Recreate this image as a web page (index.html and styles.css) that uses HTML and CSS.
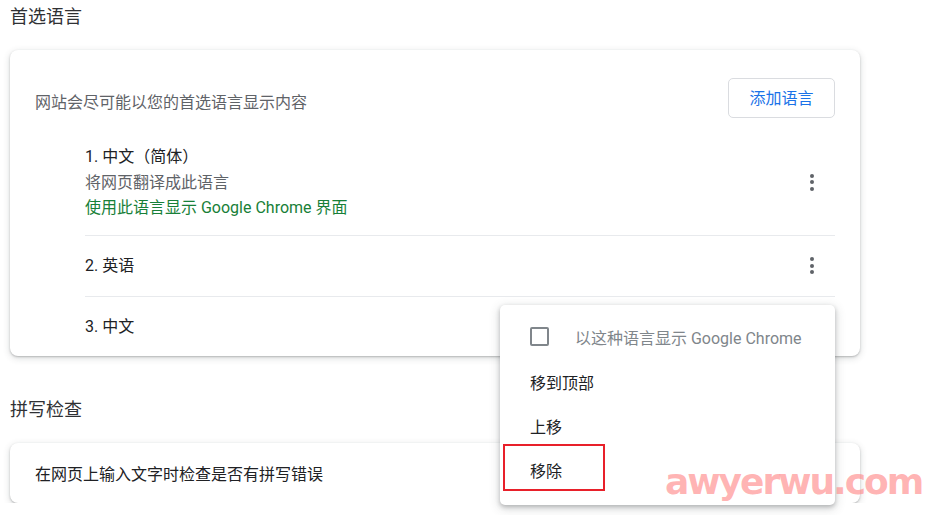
FILE: index.html
```html
<!DOCTYPE html>
<html>
<head>
    <title>语言设置</title>
    <link rel="stylesheet" href="styles.css">
</head>
<body>
    <div class="page">
        <h2 class="section-title first">首选语言</h2>
        <div class="card">
            <div class="card-header">
                <div class="card-desc">网站会尽可能以您的首选语言显示内容</div>
                <button class="add-button">添加语言</button>
            </div>
            <ul class="lang-list">
                <li class="lang-item">
                    <div class="lang-text">
                        <div class="lang-name">1. 中文（简体）</div>
                        <div class="lang-sub">将网页翻译成此语言</div>
                        <div class="lang-ui">使用此语言显示 Google Chrome 界面</div>
                    </div>
                    <span class="more-button"><i></i><i></i><i></i></span>
                </li>
                <li class="lang-item">
                    <div class="lang-text">
                        <div class="lang-name">2. 英语</div>
                    </div>
                    <span class="more-button"><i></i><i></i><i></i></span>
                </li>
                <li class="lang-item">
                    <div class="lang-text">
                        <div class="lang-name">3. 中文</div>
                    </div>
                    <span class="more-button"><i></i><i></i><i></i></span>
                </li>
            </ul>
        </div>

        <h2 class="section-title">拼写检查</h2>
        <div class="card card-row">
            <div class="card-label">在网页上输入文字时检查是否有拼写错误</div>
        </div>
    </div>

    <!-- menu opened from the 3rd language -->
    <div class="menu">
        <div class="menu-item disabled">
            <span class="checkbox"></span>
            <span>以这种语言显示 Google Chrome</span>
        </div>
        <div class="menu-item">移到顶部</div>
        <div class="menu-item">上移</div>
        <div class="menu-item">
            移除
            <span class="highlight"></span>
        </div>
    </div>

    <div class="watermark">awyerwu.com</div>
</body>
</html>
```

FILE: styles.css
```css
body {
    margin: 0;
    font-family: Roboto, "Noto Sans CJK SC", sans-serif;
    font-size: 16px;
    color: #202124;
    background: #fff;
}
.page {
    width: 850px;
    padding-left: 10px;
}
.section-title {
    font-size: 18px;
    font-weight: normal;
    line-height: 24px;
    margin: 42px 0 21px;
    color: #303134;
}
.section-title.first {
    margin-top: 5px;
}
.card {
    background: #fff;
    border-radius: 8px;
    box-shadow: 0 1px 2px rgba(60, 64, 67, 0.3), 0 2px 6px 1px rgba(60, 64, 67, 0.15);
    padding: 0 25px;
}
.card-header {
    display: flex;
    align-items: flex-start;
    justify-content: space-between;
    padding-top: 28px;
}
.card-desc {
    margin-top: 13px;
    line-height: 24px;
    color: #5f6368;
}
.add-button {
    width: 107px;
    height: 40px;
    background: #fff;
    border: 1px solid #dadce0;
    border-radius: 5px;
    color: #1a73e8;
    font-family: inherit;
    font-size: 16px;
    padding: 0 0 2px;
}
.lang-list {
    list-style: none;
    margin: 7px 0 0 50px;
    padding: 0;
}
.lang-item {
    display: flex;
    align-items: center;
    padding: 17.5px 0;
    line-height: 25px;
    border-top: 1px solid #e8eaed;
}
.lang-item:first-child {
    border-top: none;
    padding: 19px 0 14px;
    line-height: 25.5px;
}
.lang-item:last-child {
    padding-bottom: 16.5px;
}
.lang-text {
    flex: 1;
}
.lang-sub {
    color: #5f6368;
}
.lang-ui {
    color: #188038;
}
.more-button {
    width: 40px;
    margin-right: 3px;
    display: flex;
    flex-direction: column;
    align-items: center;
    gap: 2.5px;
}
.more-button i {
    width: 4px;
    height: 4px;
    border-radius: 50%;
    background: #5f6368;
}
.card-row {
    height: 60px;
    display: flex;
    align-items: center;
}
.menu {
    position: absolute;
    left: 500px;
    top: 305px;
    width: 335px;
    padding: 9px 0 13px;
    background: #fff;
    border-radius: 5px;
    box-shadow: 0 2px 4px rgba(60, 64, 67, 0.3), 0 3px 10px 2px rgba(60, 64, 67, 0.15);
}
.menu-item {
    position: relative;
    display: flex;
    align-items: center;
    height: 44px;
    padding-left: 30px;
}
.menu-item.disabled {
    height: 45px;
    padding-bottom: 1px;
    color: #80868b;
}
.checkbox {
    width: 15px;
    height: 15px;
    border: 2px solid #80868b;
    border-radius: 2px;
    margin-right: 26px;
}
.highlight {
    position: absolute;
    left: 3px;
    top: -4px;
    width: 98px;
    height: 43px;
    border: 2px solid #e8202a;
}
.watermark {
    position: absolute;
    left: 665px;
    top: 464px;
    font-family: "DejaVu Sans", sans-serif;
    font-weight: bold;
    font-size: 36px;
    line-height: 36px;
    letter-spacing: -2px;
    color: rgba(255, 130, 130, 0.6);
}
```
